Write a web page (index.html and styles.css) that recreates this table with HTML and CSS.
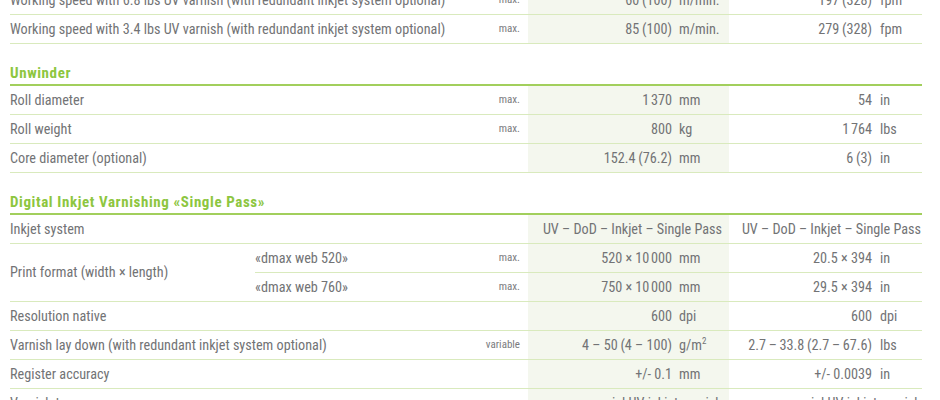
FILE: index.html
```html
<!DOCTYPE html>
<html lang="en">
<head>
<meta charset="utf-8">
<title>Specifications</title>
<link rel="stylesheet" href="styles.css">
</head>
<body>
<div class="sheet">
<table class="spec">
  <colgroup>
    <col class="c-label"><col class="c-sub"><col class="c-qual">
    <col class="c-mnum"><col class="c-munit">
    <col class="c-inum"><col class="c-iunit">
  </colgroup>
  <tbody>
    <tr>
      <td class="label" colspan="2">Working speed with 6.8 lbs UV varnish (with redundant inkjet system optional)</td>
      <td class="qual">max.</td>
      <td class="mnum">60&#8201;(100)</td><td class="munit">m/min.</td>
      <td class="inum">197&#8201;(328)</td><td class="iunit">fpm</td>
    </tr>
    <tr>
      <td class="label" colspan="2">Working speed with 3.4 lbs UV varnish (with redundant inkjet system optional)</td>
      <td class="qual">max.</td>
      <td class="mnum">85&#8201;(100)</td><td class="munit">m/min.</td>
      <td class="inum">279&#8201;(328)</td><td class="iunit">fpm</td>
    </tr>

    <tr class="section"><th colspan="7">Unwinder</th></tr>
    <tr>
      <td class="label" colspan="2">Roll diameter</td>
      <td class="qual">max.</td>
      <td class="mnum">1&#8239;370</td><td class="munit">mm</td>
      <td class="inum">54</td><td class="iunit">in</td>
    </tr>
    <tr>
      <td class="label" colspan="2">Roll weight</td>
      <td class="qual">max.</td>
      <td class="mnum">800</td><td class="munit">kg</td>
      <td class="inum">1&#8239;764</td><td class="iunit">lbs</td>
    </tr>
    <tr>
      <td class="label" colspan="2">Core diameter (optional)</td>
      <td class="qual"></td>
      <td class="mnum">152.4&#8201;(76.2)</td><td class="munit">mm</td>
      <td class="inum">6&#8201;(3)</td><td class="iunit">in</td>
    </tr>

    <tr class="section"><th colspan="7">Digital Inkjet Varnishing «Single Pass»</th></tr>
    <tr>
      <td class="label" colspan="2">Inkjet system</td>
      <td class="qual"></td>
      <td class="mtext" colspan="2">UV – DoD – Inkjet – Single Pass</td>
      <td class="itext" colspan="2">UV – DoD – Inkjet – Single Pass</td>
    </tr>
    <tr>
      <td class="label" rowspan="2">Print format (width × length)</td>
      <td class="sub">«dmax web 520»</td>
      <td class="qual">max.</td>
      <td class="mnum">520 × 10&#8239;000</td><td class="munit">mm</td>
      <td class="inum">20.5 × 394</td><td class="iunit">in</td>
    </tr>
    <tr>
      <td class="sub">«dmax web 760»</td>
      <td class="qual">max.</td>
      <td class="mnum">750 × 10&#8239;000</td><td class="munit">mm</td>
      <td class="inum">29.5 × 394</td><td class="iunit">in</td>
    </tr>
    <tr>
      <td class="label" colspan="2">Resolution native</td>
      <td class="qual"></td>
      <td class="mnum">600</td><td class="munit">dpi</td>
      <td class="inum">600</td><td class="iunit">dpi</td>
    </tr>
    <tr>
      <td class="label" colspan="2">Varnish lay down (with redundant inkjet system optional)</td>
      <td class="qual">variable</td>
      <td class="mnum">4 – 50&#8201;(4 – 100)</td><td class="munit">g/m<sup>2</sup></td>
      <td class="inum">2.7&#8201;–&#8201;33.8&#8201;(2.7&#8201;–&#8201;67.6)</td><td class="iunit">lbs</td>
    </tr>
    <tr>
      <td class="label" colspan="2">Register accuracy</td>
      <td class="qual"></td>
      <td class="mnum">+/- 0.1</td><td class="munit">mm</td>
      <td class="inum">+/- 0.0039</td><td class="iunit">in</td>
    </tr>
    <tr>
      <td class="label" colspan="2">Varnish type</td>
      <td class="qual"></td>
      <td class="mtext" colspan="2">special UV inkjet varnish</td>
      <td class="itext" colspan="2">special UV inkjet varnish</td>
    </tr>
  </tbody>
</table>
</div>
</body>
</html>
```

FILE: styles.css
```css
html, body {
  margin: 0;
  padding: 0;
  background: #ffffff;
}

body {
  font-family: "Roboto Condensed", "Roboto", "Liberation Sans", sans-serif;
  color: #727375;
  font-size: 14.2px;
}

.sheet {
  margin: -14.5px 0 0 10px;
  width: 912px;
}

.spec {
  width: 912px;
  table-layout: fixed;
  border-collapse: collapse;
}

.c-label { width: 245px; }
.c-sub { width: 190px; }
.c-qual { width: 83px; }
.c-mnum { width: 146px; }
.c-munit { width: 55px; }
.c-inum { width: 147px; }
.c-iunit { width: 46px; }

.spec td {
  height: 28px;
  padding: 0;
  border-bottom: 1px solid #d9eabd;
  white-space: nowrap;
  vertical-align: middle;
  line-height: 18px;
}

.spec td.label,
.spec td.sub {
  text-align: left;
}

.spec td.qual {
  text-align: right;
  padding-right: 8px;
  font-size: 11px;
  color: #7a7b7e;
}

.spec td.mnum,
.spec td.munit,
.spec td.mtext {
  background: #f4f7ee;
}

.spec td.mnum {
  text-align: right;
  padding-right: 2px;
}

.spec td.munit {
  text-align: left;
  padding-left: 5px;
}

.spec td.mtext {
  text-align: right;
  padding-right: 7px;
}

.spec td.inum {
  text-align: right;
  padding-right: 4px;
}

.spec td.iunit {
  text-align: left;
  padding-left: 4px;
}

.spec td.itext {
  text-align: right;
  padding-right: 1px;
}

.spec sup {
  font-size: 9px;
  line-height: 0;
  vertical-align: 6px;
}

.section th {
  height: 38px;
  padding: 0 0 2px 0;
  vertical-align: bottom;
  text-align: left;
  font-weight: bold;
  color: #8dc63f;
  font-size: 15px;
  letter-spacing: 0.6px;
  line-height: 18px;
  border-bottom: 2px solid #a2cf5c;
}
```
